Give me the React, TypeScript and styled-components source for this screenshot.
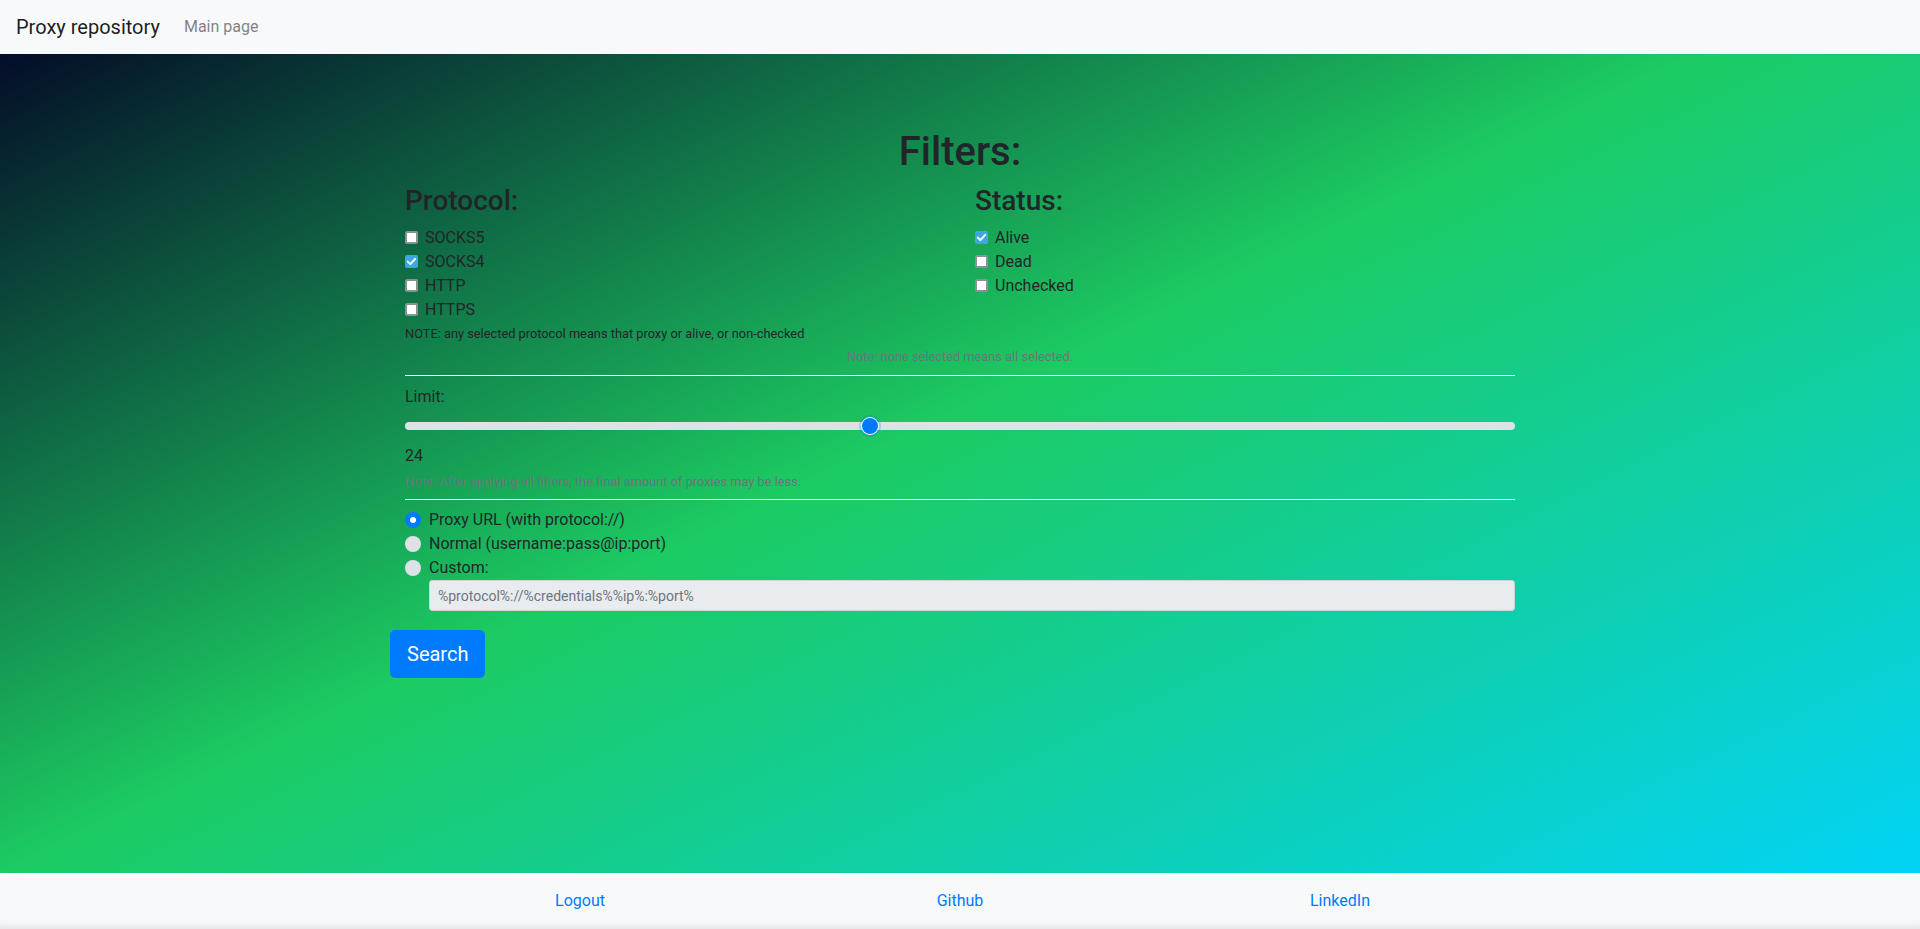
import React from "react";
import styled, { createGlobalStyle } from "styled-components";

const GlobalStyle = createGlobalStyle`
  html, body { margin: 0; padding: 0; }
  body {
    font-family: Roboto, "Liberation Sans", Arial, sans-serif;
    font-size: 16px;
    line-height: 1.5;
    color: #212529;
  }
  * { box-sizing: border-box; }
`;

const Page = styled.div`
  min-height: 100vh;
  display: flex;
  flex-direction: column;
  background: linear-gradient(to bottom right, #020024 0%, #1ccb62 47%, #00d4ff 100%);
`;

const NavBar = styled.nav`
  height: 54px;
  display: flex;
  align-items: center;
  padding: 0 16px;
  background: #f8f9fa;
`;

const Brand = styled.a`
  font-size: 20px;
  line-height: 30px;
  color: rgba(0, 0, 0, 0.9);
  text-decoration: none;
  margin-right: 16px;
`;

const NavLink = styled.a`
  font-size: 16px;
  line-height: 24px;
  padding: 0 8px;
  color: rgba(0, 0, 0, 0.5);
  text-decoration: none;
`;

const Main = styled.main`
  flex: 1;
  padding-top: 74px;
`;

const Container = styled.div`
  width: 1140px;
  margin: 0 auto;
`;

const FormArea = styled.div`
  padding: 0 15px;
`;

const Title = styled.h1`
  margin: 0 0 8px;
  font-size: 40px;
  font-weight: 500;
  line-height: 1.2;
  text-align: center;
`;

const Columns = styled.div`
  display: grid;
  grid-template-columns: 1fr 1fr;
  column-gap: 30px;
`;

const Column = styled.div`
  display: flex;
  flex-direction: column;
`;

const SubTitle = styled.h3`
  margin: 0 0 8px;
  font-size: 28px;
  font-weight: 500;
  line-height: 1.2;
`;

const CheckRow = styled.label`
  display: flex;
  align-items: flex-start;
  height: 24px;
  line-height: 24px;
  font-size: 16px;
`;

const CheckBox = styled.span<{ $checked?: boolean }>`
  width: 13px;
  height: 13px;
  margin-top: 5px;
  margin-right: 7px;
  border-radius: 2px;
  flex-shrink: 0;
  display: flex;
  align-items: center;
  justify-content: center;
  background: ${(p) => (p.$checked ? "#3fa6e6" : "#ffffff")};
  border: ${(p) => (p.$checked ? "none" : "2px solid #8e9096")};
`;

const SmallNote = styled.small<{ $muted?: boolean; $center?: boolean; $gap?: number }>`
  display: block;
  font-size: 12.8px;
  line-height: 1.5;
  margin-top: ${(p) => p.$gap ?? 4}px;
  color: ${(p) => (p.$muted ? "#6c757d" : "#212529")};
  text-align: ${(p) => (p.$center ? "center" : "left")};
`;

const Rule = styled.hr<{ $tight?: boolean }>`
  border: 0;
  border-top: 1px solid #ffffff;
  margin: ${(p) => (p.$tight ? "8px 0 8px" : "9px 0 9px")};
  height: 0;
`;

const Label = styled.div`
  font-size: 16px;
  line-height: 24px;
  margin-bottom: 7px;
`;

const Range = styled.input`
  -webkit-appearance: none;
  appearance: none;
  display: block;
  width: 100%;
  height: 20px;
  margin: 0;
  padding: 0;
  background: transparent;

  &::-webkit-slider-runnable-track {
    height: 8px;
    background: #dee2e6;
    border-radius: 16px;
    border: 0;
  }
  &::-webkit-slider-thumb {
    -webkit-appearance: none;
    appearance: none;
    width: 16px;
    height: 16px;
    margin-top: -4px;
    border: 0;
    border-radius: 50%;
    background: #007bff;
    box-shadow: 0 0 0 1px #ffffff, 0 0 0 3px rgba(0, 123, 255, 0.25);
  }
`;

const Value = styled.div`
  margin-top: 8px;
  font-size: 16px;
  line-height: 24px;
`;

const RadioRow = styled.label`
  display: flex;
  align-items: flex-start;
  height: 24px;
  line-height: 24px;
  font-size: 16px;
`;

const RadioDot = styled.span<{ $checked?: boolean }>`
  position: relative;
  width: 16px;
  height: 16px;
  margin-top: 4px;
  margin-right: 8px;
  border-radius: 50%;
  flex-shrink: 0;
  background: ${(p) => (p.$checked ? "#007bff" : "#dee2e6")};
  &::after {
    content: "";
    display: ${(p) => (p.$checked ? "block" : "none")};
    position: absolute;
    left: 5px;
    top: 5px;
    width: 6px;
    height: 6px;
    border-radius: 50%;
    background: #ffffff;
  }
`;

const TextField = styled.input`
  display: block;
  margin-left: 24px;
  width: calc(100% - 24px);
  height: 31px;
  padding: 4px 8px;
  font-family: Roboto, "Liberation Sans", Arial, sans-serif;
  font-size: 14px;
  line-height: 1.5;
  color: #6c757d;
  background: #e9ecef;
  border: 1px solid #ced4da;
  border-radius: 3.2px;
  &::placeholder { color: #6c757d; opacity: 1; }
`;

const SearchButton = styled.button`
  margin-top: 19px;
  height: 48px;
  padding: 0 16px;
  font-family: Roboto, "Liberation Sans", Arial, sans-serif;
  font-size: 20px;
  line-height: 30px;
  color: #ffffff;
  background: #007bff;
  border: 1px solid #007bff;
  border-radius: 4.8px;
  cursor: pointer;
`;

const Footer = styled.footer`
  background: #f8f9fa;
  padding: 16px 0;
  box-shadow: inset 0 -8px 8px -6px rgba(0, 0, 0, 0.1);
`;

const FooterRow = styled.div`
  display: grid;
  grid-template-columns: repeat(3, 1fr);
`;

const FooterLink = styled.a`
  text-align: center;
  font-size: 16px;
  line-height: 24px;
  color: #007bff;
  text-decoration: none;
`;

const Check = () => (
  <svg width="13" height="13" viewBox="0 0 13 13">
    <path d="M2.8 6.6 L5.3 9.1 L10.2 3.9" fill="none" stroke="#fff" strokeWidth="2" strokeLinecap="round" strokeLinejoin="round" />
  </svg>
);

const CheckItem = ({ label, checked }: { label: string; checked?: boolean }) => (
  <CheckRow>
    <CheckBox $checked={checked}>{checked && <Check />}</CheckBox>
    {label}
  </CheckRow>
);

export default function App() {
  return (
    <>
      <GlobalStyle />
      <Page>
        <NavBar>
          <Brand href="#">Proxy repository</Brand>
          <NavLink href="#">Main page</NavLink>
        </NavBar>
        <Main>
          <Container>
            <FormArea>
              <Title>Filters:</Title>
              <Columns>
                <Column>
                  <SubTitle>Protocol:</SubTitle>
                  <CheckItem label="SOCKS5" />
                  <CheckItem label="SOCKS4" checked />
                  <CheckItem label="HTTP" />
                  <CheckItem label="HTTPS" />
                  <SmallNote $gap={2}>NOTE: any selected protocol means that proxy or alive, or non-checked</SmallNote>
                </Column>
                <Column>
                  <SubTitle>Status:</SubTitle>
                  <CheckItem label="Alive" checked />
                  <CheckItem label="Dead" />
                  <CheckItem label="Unchecked" />
                </Column>
              </Columns>
              <SmallNote $muted $center>Note: none selected means all selected.</SmallNote>
              <Rule />
              <Label>Limit:</Label>
              <Range type="range" min={1} max={56} defaultValue={24} />
              <Value>24</Value>
              <SmallNote $muted>Note: After applying all filters, the final amount of proxies may be less.</SmallNote>
              <Rule $tight />
              <RadioRow>
                <RadioDot $checked />
                Proxy URL (with protocol://)
              </RadioRow>
              <RadioRow>
                <RadioDot />
                Normal (username:pass@ip:port)
              </RadioRow>
              <RadioRow>
                <RadioDot />
                Custom:
              </RadioRow>
              <TextField readOnly placeholder="%protocol%://%credentials%%ip%:%port%" />
            </FormArea>
            <SearchButton>Search</SearchButton>
          </Container>
        </Main>
        <Footer>
          <Container>
            <FooterRow>
              <FooterLink href="#">Logout</FooterLink>
              <FooterLink href="#">Github</FooterLink>
              <FooterLink href="#">LinkedIn</FooterLink>
            </FooterRow>
          </Container>
        </Footer>
      </Page>
    </>
  );
}
